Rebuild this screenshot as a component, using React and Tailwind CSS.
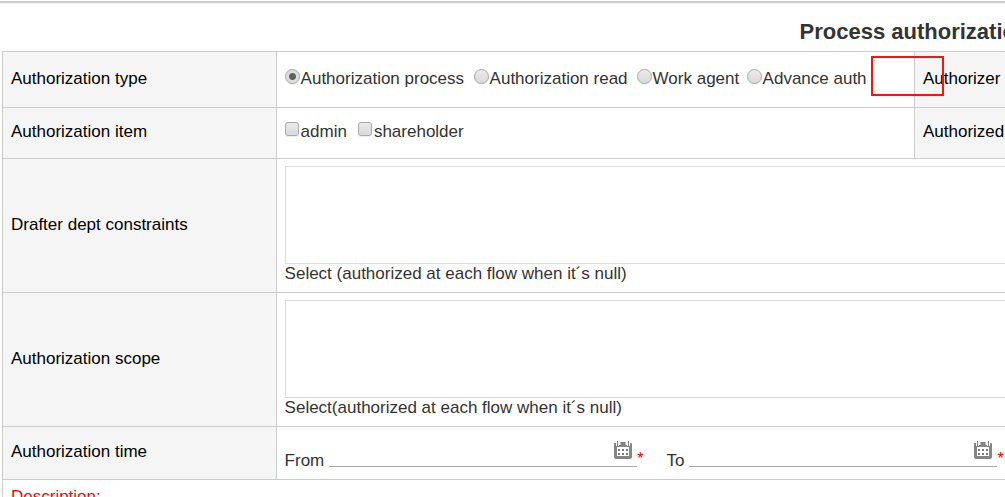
import React from "react";

const labelCell = "border border-[#cccccc] bg-[#f5f5f5] px-2 pb-0.5 text-left font-normal text-black";
const fieldCell = "border border-[#cccccc] px-2";

function Radio({ label, defaultChecked }) {
  return (
    <label className="flex items-center gap-px whitespace-nowrap">
      <input
        type="radio"
        name="authorization-type"
        defaultChecked={defaultChecked}
        className="mb-1 size-[15px] shrink-0 appearance-none rounded-full border border-[#a9a9a9] bg-linear-to-b from-[#ebebeb] to-[#d9d9d9] shadow-[0_1px_0_#eeeeee] checked:bg-[radial-gradient(circle,#606060_3px,#dedede_4px)]"
      />
      <span>{label}</span>
    </label>
  );
}

function Checkbox({ label }) {
  return (
    <label className="flex items-center gap-0.5 whitespace-nowrap">
      <input
        type="checkbox"
        className="mb-1.5 size-3.5 shrink-0 appearance-none rounded-[3px] border border-[#a9a9a9] bg-linear-to-b from-[#ebebeb] to-[#d9d9d9] shadow-[0_1px_0_#eeeeee] checked:bg-[#606060]"
      />
      <span>{label}</span>
    </label>
  );
}

function CalendarIcon() {
  return (
    <svg width="18" height="18" viewBox="0 0 18 18" aria-hidden="true">
      <path
        d="M0 3Q0 2 1 2H2V5H5V4H13V5H16V2H17Q18 2 18 3V16Q18 18 16 18H2Q0 18 0 16Z"
        fill="#858585"
      />
      <path d="M3 6H15V15H3Z" fill="#fff" />
      <path d="M3 0H4V5H3ZM14 0H15V5H14Z" fill="#858585" />
      <path d="M6 1H12V4H6Z" fill="#b5b5b5" />
      <path d="M7 1H11V4H7Z" fill="#858585" />
      <path
        d="M4 8H6V10H4ZM8 8H10V10H8ZM12 8H14V10H12ZM4 12H6V14H4ZM8 12H10V14H8ZM12 12H14V14H12Z"
        fill="#777"
      />
    </svg>
  );
}

function DateField({ id, label }) {
  return (
    <div className="flex items-end">
      <label htmlFor={id} className="mr-[5px] leading-5">
        {label}
      </label>
      <div className="mb-1 flex w-[308px] border-b border-[#aaaaaa] pb-1.5">
        <input id={id} type="text" className="h-5 min-w-0 flex-1 bg-transparent outline-none" />
        <button type="button" aria-label={"Choose date: " + label} className="mr-[5px]">
          <CalendarIcon />
        </button>
      </div>
      <span className="mb-0.5 text-base leading-5 text-[#ff0000]">*</span>
    </div>
  );
}

export default function App() {
  return (
    <div className="relative h-screen overflow-hidden bg-white font-['Liberation_Sans',Arial,sans-serif] text-[17px] leading-5 text-[#333333]">
      <div className="mt-px h-0.5 bg-[#cccfcc] shadow-[0_1px_0_#f0f0f0]" />
      <main className="min-w-[1827px] pl-0.5">
        <h1 className="flex h-12 items-center justify-center pt-2.5 text-[22px] font-bold">
          Process authorization
        </h1>
        <table className="w-full table-fixed border-collapse">
          <colgroup>
            <col className="w-[15%]" />
            <col className="w-[35%]" />
            <col className="w-[15%]" />
            <col className="w-[35%]" />
          </colgroup>
          <tbody>
            <tr className="h-14">
              <th scope="row" className={labelCell}>Authorization type</th>
              <td className={fieldCell + " pb-0.5"}>
                <div className="grid grid-cols-[189px_163px_110px_116px]">
                  <Radio label="Authorization process" defaultChecked />
                  <Radio label="Authorization read" />
                  <Radio label="Work agent" />
                  <Radio label="Advance auth" />
                </div>
              </td>
              <th scope="row" className={labelCell}>Authorizer</th>
              <td className={fieldCell} />
            </tr>
            <tr className="h-[51px]">
              <th scope="row" className={labelCell}>Authorization item</th>
              <td className={fieldCell + " pb-0.5"}>
                <div className="flex gap-[11px]">
                  <Checkbox label="admin" />
                  <Checkbox label="shareholder" />
                </div>
              </td>
              <th scope="row" className={labelCell}>Authorized</th>
              <td className={fieldCell} />
            </tr>
            <tr className="h-[134px]">
              <th scope="row" className={labelCell}>
                <label htmlFor="dept">Drafter dept constraints</label>
              </th>
              <td colSpan={3} className={fieldCell + " pt-[7px] align-top"}>
                <textarea id="dept" className="block h-[98px] w-full resize-none border border-[#dddddd] outline-none" />
                <p>Select (authorized at each flow when it´s null)</p>
              </td>
            </tr>
            <tr className="h-[134px]">
              <th scope="row" className={labelCell}>
                <label htmlFor="scope">Authorization scope</label>
              </th>
              <td colSpan={3} className={fieldCell + " pt-[7px] align-top"}>
                <textarea id="scope" className="block h-[98px] w-full resize-none border border-[#dddddd] outline-none" />
                <p>Select(authorized at each flow when it´s null)</p>
              </td>
            </tr>
            <tr className="h-[53px]">
              <th scope="row" className={labelCell}>Authorization time</th>
              <td colSpan={3} className={fieldCell + " pb-2 align-bottom"}>
                <div className="flex gap-[23px]">
                  <DateField id="from" label="From" />
                  <DateField id="to" label="To" />
                </div>
              </td>
            </tr>
            <tr className="h-14">
              <td colSpan={4} className={fieldCell + " pt-[7px] align-top text-[#ff0000]"}>Description:</td>
            </tr>
          </tbody>
        </table>
      </main>
      <div className="pointer-events-none absolute top-14 left-[871px] h-10 w-[73px] border-2 border-[#ff1010]" />
    </div>
  );
}
